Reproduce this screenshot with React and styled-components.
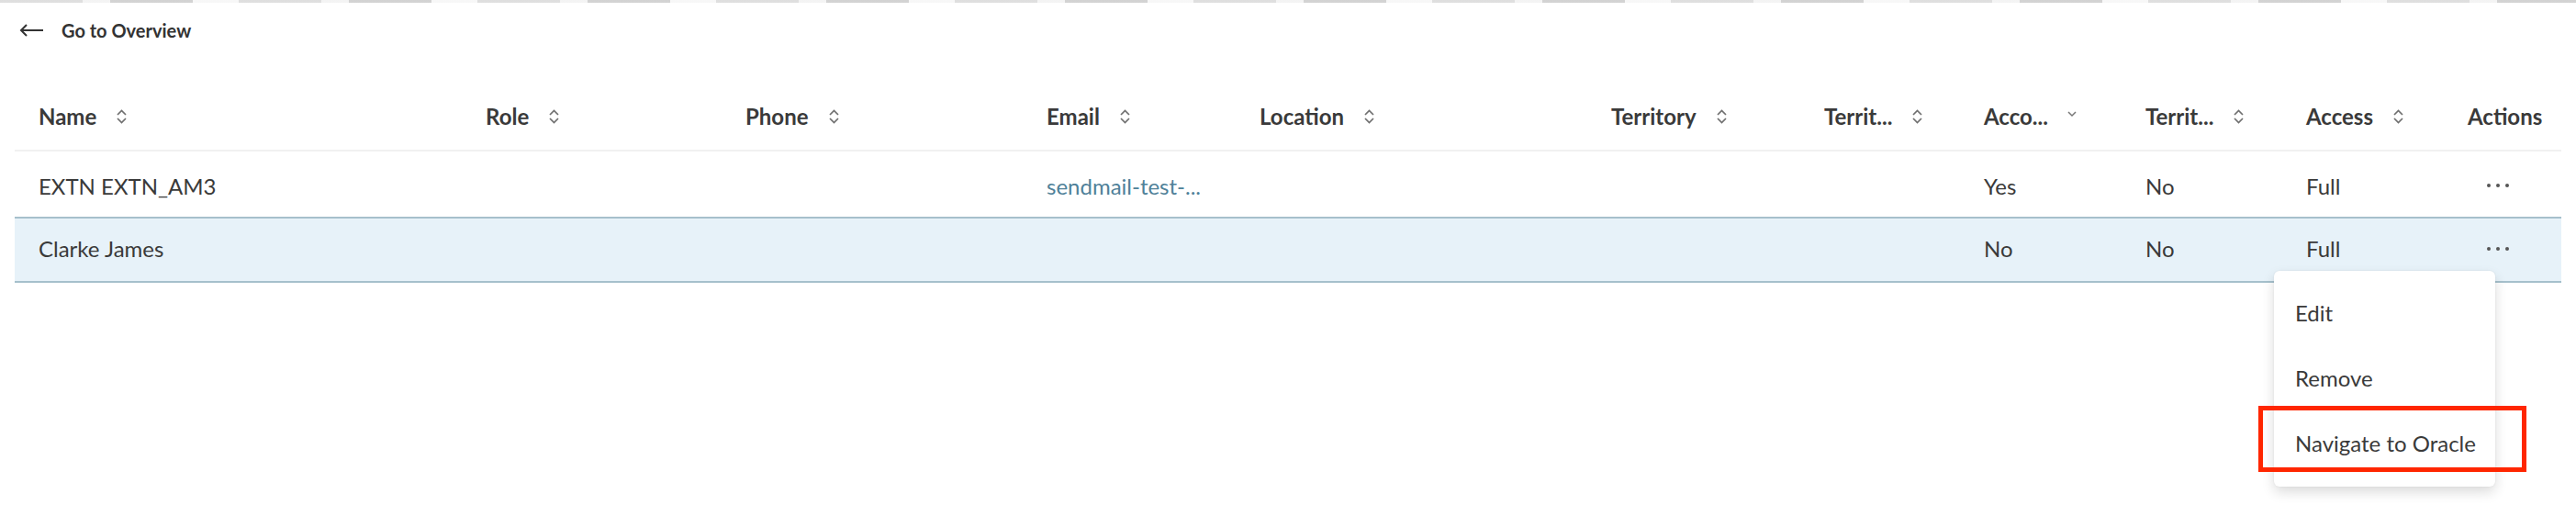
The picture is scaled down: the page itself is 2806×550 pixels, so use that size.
import React from 'react';
import styled, { createGlobalStyle } from 'styled-components';

const COLS = '487px 283px 328px 232px 383px 232px 174px 176px 175px 176px 1fr';

const GlobalStyle = createGlobalStyle`
  body {
    margin: 0;
    background: #fff;
    font-family: Lato, "Liberation Sans", sans-serif;
    color: #333;
  }
`

const Page = styled.div`
  width: 2806px;
  height: 550px;
  overflow: hidden;
  background: #fff;
`
const TopEdge = styled.div`
  height: 3px;
  background: repeating-linear-gradient(90deg, #c9c9c9 0 90px, #ececec 90px 120px, #b5b5b5 120px 210px, #f2f2f2 210px 260px);
  opacity: 0.6;
`
const BackBar = styled.div`
  height: 60px;
  display: flex;
  align-items: center;
  padding-left: 20px;
  gap: 19px;
`
const BackText = styled.span`
  font-size: 20px;
  font-weight: 700;
  color: #333;
`
const Table = styled.div`
  margin: 25px 16px 0;
`
const HeaderRow = styled.div`
  display: grid;
  grid-template-columns: ${COLS};
  align-items: center;
  height: 77px;
  box-sizing: border-box;
  padding: 2px 0 0 26px;
  border-bottom: 2px solid #f1f1f1;
`
const HeadCell = styled.div`
  display: flex;
  align-items: center;
  gap: 20px;
  font-size: 24px;
  font-weight: 700;
  color: #3a3a3a;
  white-space: nowrap;
`
const Row = styled.div`
  position: relative;
  display: grid;
  grid-template-columns: ${COLS};
  align-items: center;
  box-sizing: border-box;
  height: ${p => (p.$selected ? '72px' : '71px')};
  padding: ${p => (p.$selected ? '0 0 3px' : '3px 0 0')} 26px;
  background: ${p => (p.$selected ? '#e7f2f9' : '#fff')};
  border-top: ${p => (p.$selected ? '2px solid #a6c0cc' : 'none')};
  border-bottom: ${p => (p.$selected ? '2px solid #a6c0cc' : 'none')};
`
const Cell = styled.div`
  font-size: 24px;
  color: ${p => (p.$link ? '#4f8199' : '#3a3a3a')};
  white-space: nowrap;
`
const DotsCell = styled.div`
  display: flex;
  padding-left: 20px;
`
const Menu = styled.div`
  position: absolute;
  top: 57px;
  right: 72px;
  width: 241px;
  box-sizing: border-box;
  padding: 10px 0 12px;
  background: #fff;
  border-radius: 6px;
  box-shadow: 0 6px 14px rgba(0, 0, 0, 0.14), 0 0 2px rgba(0, 0, 0, 0.08);
  z-index: 2;
`
const MenuItem = styled.div`
  position: relative;
  height: 71px;
  display: flex;
  align-items: center;
  padding-left: 23px;
  font-size: 24px;
  color: #3a3a3a;
  white-space: nowrap;
`
const Highlight = styled.div`
  position: absolute;
  top: -5px;
  bottom: 4px;
  left: -17px;
  right: -34px;
  border: 5px solid #ff2600;
`

const BackArrow = () => (
  <svg width="28" height="16" viewBox="0 0 28 16">
    <path d="M27 8 H3 M9 2 L3 8 L9 14" fill="none" stroke="#333" strokeWidth="2" />
  </svg>
)

const SortIcon = () => (
  <svg width="15" height="20" viewBox="0 0 15 20">
    <path d="M3 8 L7.5 3.5 L12 8 M3 12 L7.5 16.5 L12 12" fill="none" stroke="#6f6f6f" strokeWidth="1.7" />
  </svg>
)

const DownIcon = () => (
  <svg width="12" height="12" viewBox="0 0 12 12" style={{ marginTop: -6 }}>
    <path d="M2 4 L6 8 L10 4" fill="none" stroke="#777" strokeWidth="1.5" />
  </svg>
)

const Dots = () => (
  <svg width="26" height="6" viewBox="0 0 26 6">
    <circle cx="3" cy="3" r="2" fill="#555" />
    <circle cx="13" cy="3" r="2" fill="#555" />
    <circle cx="23" cy="3" r="2" fill="#555" />
  </svg>
)

const columns = [
  { label: 'Name', icon: 'sort' },
  { label: 'Role', icon: 'sort' },
  { label: 'Phone', icon: 'sort' },
  { label: 'Email', icon: 'sort' },
  { label: 'Location', icon: 'sort' },
  { label: 'Territory', icon: 'sort' },
  { label: 'Territ...', icon: 'sort' },
  { label: 'Acco...', icon: 'down' },
  { label: 'Territ...', icon: 'sort' },
  { label: 'Access', icon: 'sort' },
  { label: 'Actions' },
]

const rows = [
  { name: 'EXTN EXTN_AM3', email: 'sendmail-test-...', acc: 'Yes', terr: 'No', access: 'Full' },
  { name: 'Clarke James', email: '', acc: 'No', terr: 'No', access: 'Full', selected: true },
]

const App = () => {
  return (
    <Page>
      <GlobalStyle />
      <TopEdge />
      <BackBar>
        <BackArrow />
        <BackText>Go to Overview</BackText>
      </BackBar>
      <Table>
        <HeaderRow>
          {columns.map((c, i) => (
            <HeadCell key={i}>
              {c.label}
              {c.icon === 'sort' && <SortIcon />}
              {c.icon === 'down' && <DownIcon />}
            </HeadCell>
          ))}
        </HeaderRow>
        {rows.map((r, i) => (
          <Row key={i} $selected={r.selected}>
            <Cell>{r.name}</Cell>
            <Cell />
            <Cell />
            <Cell $link>{r.email}</Cell>
            <Cell />
            <Cell />
            <Cell />
            <Cell>{r.acc}</Cell>
            <Cell>{r.terr}</Cell>
            <Cell>{r.access}</Cell>
            <DotsCell><Dots /></DotsCell>
            {r.selected && (
              <Menu>
                <MenuItem>Edit</MenuItem>
                <MenuItem>Remove</MenuItem>
                <MenuItem>
                  Navigate to Oracle
                  <Highlight />
                </MenuItem>
              </Menu>
            )}
          </Row>
        ))}
      </Table>
    </Page>
  )
}

export default App
